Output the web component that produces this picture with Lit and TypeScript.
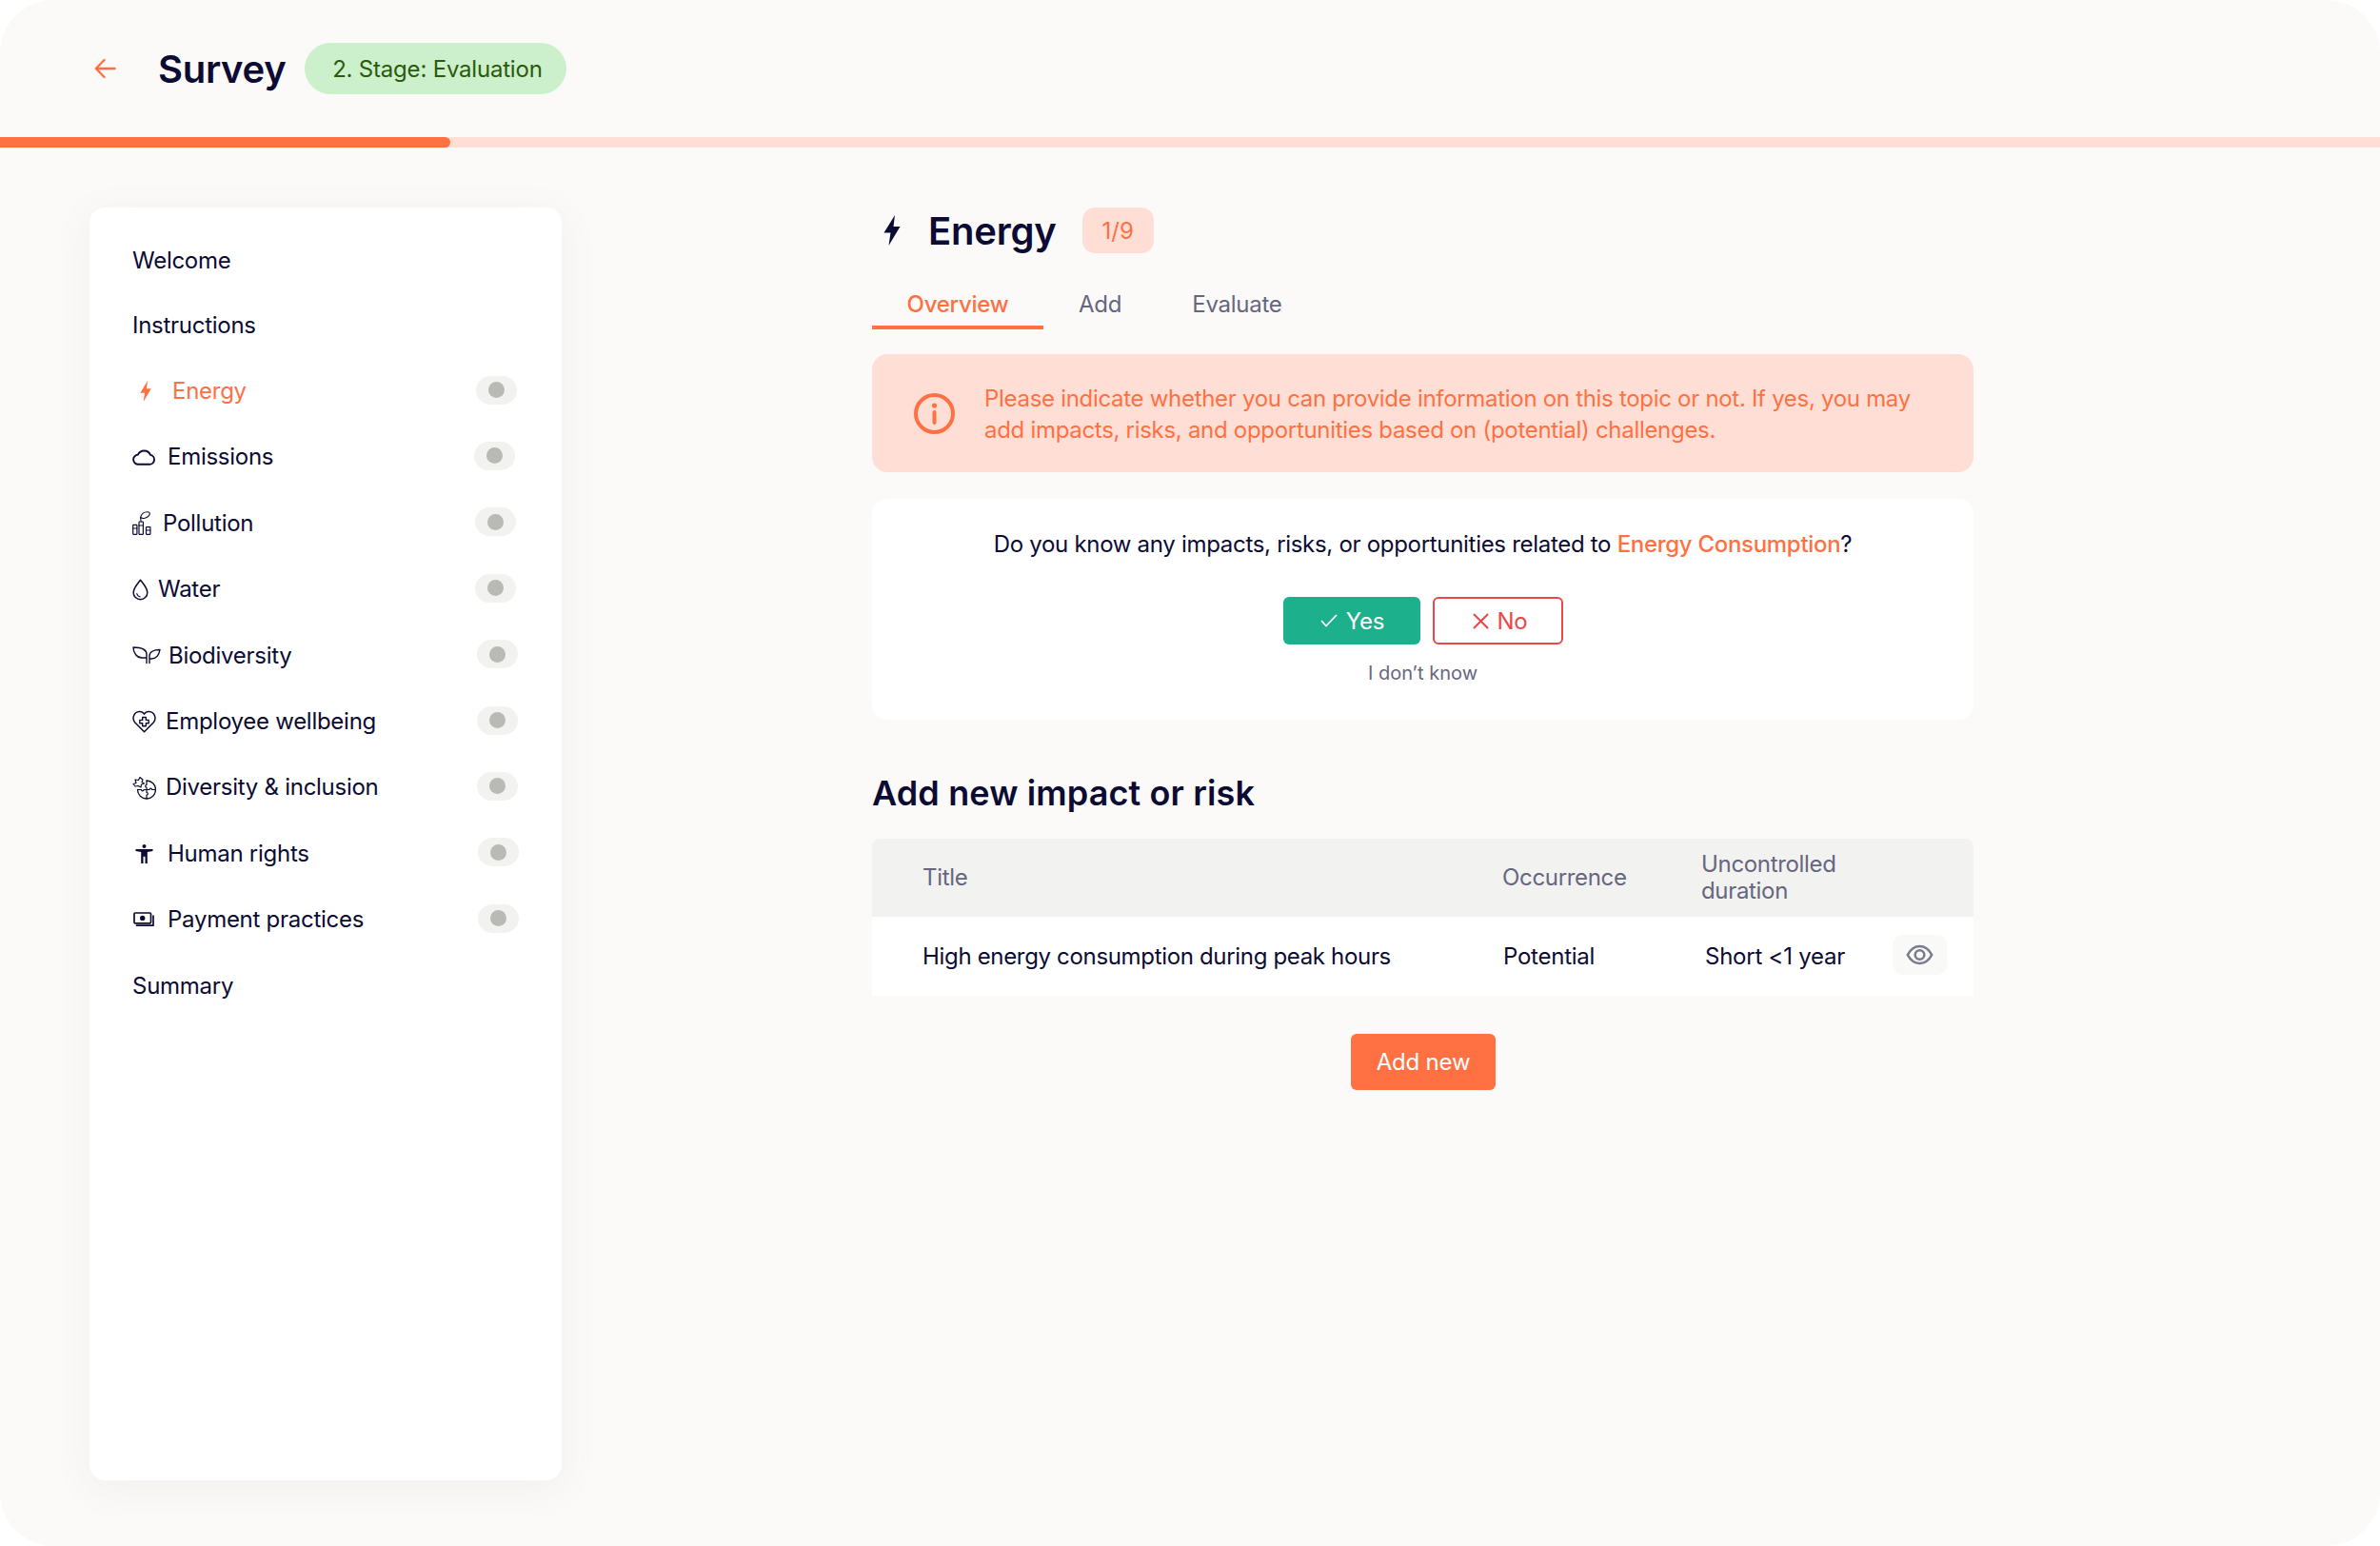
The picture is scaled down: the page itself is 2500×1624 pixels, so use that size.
import { LitElement, html, css, svg } from "lit";
import { customElement } from "lit/decorators.js";

const stroke = (w: number, h: number, body: unknown) => html`<svg width=${w} height=${h} viewBox="0 0 ${w} ${h}" fill="none" stroke="currentColor" stroke-width="1.6" stroke-linecap="round" stroke-linejoin="round">${body}</svg>`;

const bolt = (w: number, h: number) => html`<svg width=${w} height=${h} viewBox="0 0 18 32" preserveAspectRatio="none" fill="currentColor"><path d="M12 0 0.500 18.500H7.500L5.500 32 17.500 12H10.500z"/></svg>`;

const icons: Record<string, unknown> = {
  bolt: bolt(12, 22),
  cloud: stroke(24, 17, svg`<path d="M6.500 15.800h11.400a5 5 0 0 0 1.100-9.900A7.200 7.200 0 0 0 5.900 5.600 5.100 5.100 0 0 0 6.500 15.800z" stroke-width="1.900"/>`),
  pollution: stroke(20, 25, svg`<path d="M8.500 6.500c.8-2.700 3.500-5.700 7.500-5.700 2.500 0 3 2 1.500 3.800C15.500 7 11 8.500 8.500 6.500zM8.500 6.500 9.200 11" stroke-width="1.100"/><rect x=".7" y="14.300" width="4.200" height="10" rx=".5" stroke-width="1.200"/><rect x="7" y="11" width="4.400" height="13.300" rx=".5" stroke-width="1.200"/><rect x="14.500" y="16.700" width="4.400" height="7.600" rx=".5" stroke-width="1.200"/><path d="M.7 18h4.200M7 15h4.400M14.500 20h4.400" stroke-width="1"/>`),
  water: stroke(17, 23, svg`<path d="M8.500 1.200C5.800 5 1.200 9.500 1.200 14.400a7.300 7.300 0 0 0 14.600 0C15.800 9.500 11.200 5 8.500 1.200z" stroke-width="1.500"/><path d="M4.800 15.500c.4 1.900 1.700 3 3.300 3.300" stroke-width="1.200"/>`),
  bio: stroke(30, 19, svg`<path d="M15 17.500V8.500C15 4 11 1 1 1c0 6 4 11 9 11h5" stroke-width="1.400"/><path d="M18 17.500V10c0-4 4-6.500 11-6.500-1 6-4 9.500-9 9.500h-2" stroke-width="1.400"/>`),
  heart: stroke(25, 24, svg`<path d="M12.500 22.800 2.600 12.700C-.6 8.800 1.500 2 7.200 1.500c2.300-.2 4.200 .8 5.300 2.600 1.100-1.800 3-2.800 5.300-2.600 5.700 .5 7.800 7.300 4.600 11.200z" stroke-width="1.500"/><path d="M10.700 7.500h3.600v2.900h2.900v3.400h-2.900v2.900h-3.600v-2.900H7.800v-3.400h2.900z" stroke-width="1.400"/>`),
  puzzle: stroke(25, 25, svg`<path d="M15 5A9.500 9.500 0 1 1 5.500 14.500" stroke-width="1.300"/><path d="M15 5v4.500c-1.800 0-1.800 2.500 0 2.500v2.500M5.500 14.500h4c0 1.800 2.500 1.800 2.500 0h3M15 14.500h3c0-1.800 2.500-1.800 2.500 0h4M15 14.500v3c1.800 0 1.800 2.500 0 2.500v4" stroke-width="1.200"/><path d="M1 8.500l3-1-1-3.500 3.500 .5L8 1.500l3 2.500-1 2.500 2.500 1.500-3 1-.5 3-3-1.500L3 11z" stroke-width="1.200"/>`),
  human: html`<svg width="19" height="20" viewBox="0 0 19 20" fill="currentColor"><circle cx="9.500" cy="2" r="2"/><path d="M.5 5h18v1.900L12.800 8v12h-2.300v-7.300h-2V20H6.200V8L.5 6.900z"/></svg>`,
  pay: stroke(22, 16, svg`<rect x="1" y="1" width="17.500" height="10.800" rx="1" stroke-width="1.700"/><circle cx="9.700" cy="6.400" r="2.700" fill="currentColor" stroke="none"/><path d="M21 4v10.200H3.500" stroke-width="1.700"/>`),
};

const topics = [
  { name: "Energy", icon: "bolt", active: true, iw: 42, lead: 8, pill: 0 },
  { name: "Emissions", icon: "cloud", iw: 37, lead: 0, pill: 2 },
  { name: "Pollution", icon: "pollution", iw: 32, lead: 0, pill: 1 },
  { name: "Water", icon: "water", iw: 27, lead: 0, pill: 1 },
  { name: "Biodiversity", icon: "bio", iw: 38, lead: 0, pill: -1 },
  { name: "Employee wellbeing", icon: "heart", iw: 35, lead: 0, pill: -1 },
  { name: "Diversity & inclusion", icon: "puzzle", iw: 35, lead: 0, pill: -1 },
  { name: "Human rights", icon: "human", iw: 37, lead: 3, pill: -2 },
  { name: "Payment practices", icon: "pay", iw: 37, lead: 1, pill: -2 },
];

@customElement("app-root")
export class AppRoot extends LitElement {
  static styles = css`
    :host { display: block; width: 2500px; height: 1624px; background: #fff; font-family: Inter, "Liberation Sans", sans-serif; color: #0b0b33; }
    * { box-sizing: border-box; }
    .frame { width: 2500px; height: 1624px; border-radius: 56px; background: #fbfaf8; overflow: hidden; display: flex; flex-direction: column; }
    .top { height: 144px; display: flex; align-items: center; padding: 0 0 0 99px; flex: none; }
    .back { width: 23px; height: 22px; color: #ff7043; display: flex; margin-right: 44px; }
    .top h1 { margin: 0; font-size: 40px; font-weight: 600; line-height: 48px; margin-right: 20px; position: relative; top: 1px; letter-spacing: -0.3px; }
    .stage { height: 54px; width: 275px; padding-left: 3px; border-radius: 27px; background: #ccf0cb; color: #2b5a0b; font-size: 24px; letter-spacing: -0.2px; display: flex; align-items: center; justify-content: center; }
    .track { height: 11px; background: #ffdfd5; flex: none; }
    .fill { width: 473px; height: 11px; background: #ff7043; border-radius: 0 6px 6px 0; }
    .body { display: flex; align-items: flex-start; padding: 63px 0 0 94px; }
    .side { width: 496px; height: 1337px; background: #fff; border-radius: 16px; box-shadow: 0 8px 40px rgba(110, 100, 80, 0.07); padding: 21px 0 0 45px; flex: none; }
    .row { height: 69.4px; display: flex; align-items: center; font-size: 24px; line-height: 30px; letter-spacing: -0.27px; }
    .row.first { height: 68px; padding-top: 1px; }
    .row.on { color: #ff7043; }
    .ic { flex: none; display: flex; align-items: center; }
    .pill { margin-left: auto; margin-bottom: 3px; width: 43px; height: 30px; border-radius: 15px; background: #f2f2f1; display: flex; align-items: center; justify-content: center; flex: none; }
    .pill i { width: 17px; height: 17px; border-radius: 50%; background: #b9b9b6; display: block; }
    .main { width: 1157px; margin-left: 326px; flex: none; }
    .title { height: 48px; display: flex; align-items: center; }
    .title .bolt { width: 59px; padding-left: 12px; display: flex; }
    .title h2 { margin: 0; font-size: 40px; font-weight: 600; line-height: 48px; margin-right: 27px; position: relative; top: 1px; letter-spacing: -0.2px; }
    .count { width: 75px; height: 48px; padding-top: 1px; border-radius: 13px; background: #ffdfd5; color: #ff7043; font-size: 24px; display: flex; align-items: center; justify-content: center; }
    .tabs { display: flex; margin-top: 30px; font-size: 24px; color: #66667f; height: 50px; letter-spacing: -0.25px; }
    .tab { height: 50px; display: flex; justify-content: center; padding-top: 9px; line-height: 30px; }
    .tab.on { width: 180px; color: #ff7043; font-weight: 500; border-bottom: 4px solid #ff7043; }
    .tab.add { margin-left: 37px; }
    .tab.ev { margin-left: 74px; }
    .alert { margin-top: 26px; height: 124px; background: #ffdfd5; border-radius: 16px; color: #ff7043; font-size: 24px; line-height: 33px; letter-spacing: -0.3px; display: flex; align-items: center; padding: 2px 0 0 44px; gap: 31px; }
    .alert svg { flex: none; position: relative; top: -1px; }
    .ask { margin-top: 28px; height: 232px; background: #fff; border-radius: 16px; padding-top: 32px; display: flex; flex-direction: column; align-items: center; }
    .ask p { margin: 0; font-size: 24px; line-height: 32px; letter-spacing: -0.3px; }
    .ask b { font-weight: 500; color: #ff7043; }
    .btns { display: flex; gap: 13px; margin-top: 39px; margin-left: 0; }
    .btn { height: 50px; border-radius: 6px; font-size: 24px; display: flex; align-items: center; justify-content: center; gap: 9px; letter-spacing: -0.25px; }
    .yes { width: 144px; background: #1cb08c; color: #fff; padding-left: 2px; }
    .no { width: 137px; border: 2px solid #e9474a; color: #e9474a; background: #fff; padding-left: 5px; }
    .dk { margin-top: 17px; font-size: 20px; line-height: 26px; color: #66667f; }
    .ask-head { margin: 55px 0 0; font-size: 36px; font-weight: 600; line-height: 44px; letter-spacing: 0.12px; }
    .table { margin-top: 26px; }
    .thead { height: 82px; background: #f2f2f0; border-radius: 8px 8px 0 0; display: grid; grid-template-columns: 609px 209px 1fr; align-items: center; padding-left: 53px; color: #66667f; font-size: 24px; line-height: 28px; letter-spacing: -0.33px; }
    .trow { height: 83px; background: #fff; display: grid; grid-template-columns: 610px 212px 1fr; align-items: center; padding-left: 53px; font-size: 24px; letter-spacing: -0.24px; position: relative; }
    .trow .name { letter-spacing: -0.33px; }
    .eye { position: absolute; left: 1072px; top: 19px; width: 57px; height: 42px; border-radius: 10px; background: #f9f9f8; color: #7b7b90; display: flex; align-items: center; justify-content: center; }
    .addbar { display: flex; justify-content: center; margin-top: 40px; padding-left: 1px; }
    .addnew { width: 152px; height: 59px; border-radius: 6px; background: #ff7043; color: #fff; font-size: 24px; letter-spacing: -0.2px; display: flex; align-items: center; justify-content: center; }
  `;

  render() {
    return html`<div class="frame">
      <div class="top">
        <div class="back"><svg width="23" height="22" viewBox="0 0 23 22" fill="none" stroke="currentColor" stroke-width="2.400" stroke-linecap="round" stroke-linejoin="round"><path d="M21.500 11H1.800M10.500 2 1.800 11l8.700 9"/></svg></div>
        <h1>Survey</h1>
        <div class="stage">2. Stage: Evaluation</div>
      </div>
      <div class="track"><div class="fill"></div></div>
      <div class="body">
        <aside class="side">
          <div class="row first">Welcome</div>
          <div class="row">Instructions</div>
          ${topics.map((t) => html`<div class="row ${t.active ? "on" : ""}">
            <span class="ic" style="width:${t.iw}px;padding-left:${t.lead}px">${icons[t.icon]}</span>
            <span>${t.name}</span>
            <span class="pill" style="margin-right:${47 + t.pill}px"><i></i></span>
          </div>`)}
          <div class="row">Summary</div>
        </aside>
        <main class="main">
          <div class="title">
            <span class="bolt">${bolt(18, 32)}</span>
            <h2>Energy</h2>
            <span class="count">1/9</span>
          </div>
          <div class="tabs">
            <div class="tab on">Overview</div>
            <div class="tab add">Add</div>
            <div class="tab ev">Evaluate</div>
          </div>
          <div class="alert">
            <svg width="43" height="43" viewBox="0 0 43 43" fill="none" stroke="currentColor" stroke-width="4"><circle cx="21.500" cy="21.500" r="19.500"/><path d="M21.500 20v11" stroke-linecap="round"/><circle cx="21.500" cy="13" r="2.600" fill="currentColor" stroke="none"/></svg>
            <div>Please indicate whether you can provide information on this topic or not. If yes, you may<br />add impacts, risks, and opportunities based on (potential) challenges.</div>
          </div>
          <div class="ask">
            <p>Do you know any impacts, risks, or opportunities related to <b>Energy Consumption</b>?</p>
            <div class="btns">
              <div class="btn yes"><svg width="18" height="14" viewBox="0 0 18 14" fill="none" stroke="currentColor" stroke-width="1.800" stroke-linecap="round" stroke-linejoin="round"><path d="M1.500 7.500 6 12.500 16.500 1.500"/></svg>Yes</div>
              <div class="btn no"><svg width="17" height="17" viewBox="0 0 17 17" fill="none" stroke="currentColor" stroke-width="2" stroke-linecap="round"><path d="M1.500 1.500l14 14M15.500 1.500l-14 14"/></svg>No</div>
            </div>
            <div class="dk">I don’t know</div>
          </div>
          <h3 class="ask-head">Add new impact or risk</h3>
          <div class="table">
            <div class="thead"><span>Title</span><span>Occurrence</span><span>Uncontrolled<br />duration</span></div>
            <div class="trow"><span class="name">High energy consumption during peak hours</span><span>Potential</span><span>Short &lt;1 year</span>
              <div class="eye"><svg width="29" height="22" viewBox="0 0 29 22" fill="none" stroke="currentColor" stroke-width="2.600"><path d="M1.800 11C5 5 9.500 2 14.500 2s9.500 3 12.700 9c-3.200 6-7.700 9-12.700 9S5 17 1.800 11z"/><circle cx="14.500" cy="11" r="4.800"/></svg></div>
            </div>
          </div>
          <div class="addbar"><div class="addnew">Add new</div></div>
        </main>
      </div>
    </div>`;
  }
}
